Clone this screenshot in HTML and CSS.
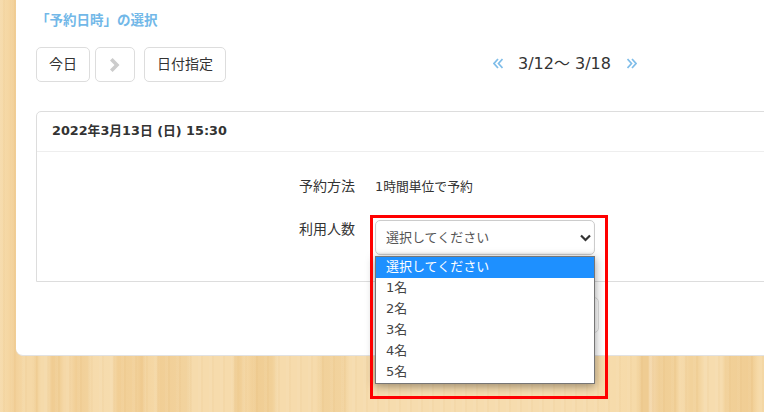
FILE: index.html
```html
<!DOCTYPE html>
<html lang="ja">
<head>
<meta charset="utf-8">
<title>予約日時の選択</title>
<link rel="stylesheet" href="styles.css">
</head>
<body>
<main class="card">
  <h2 class="title">「予約日時」の選択</h2>
  <div class="toolbar">
    <div class="tools">
      <button class="btn" type="button">今日</button>
      <button class="btn btn-icon" type="button" aria-label="次へ">
        <svg width="12" height="16" viewBox="0 0 12 16"><path class="chev" d="M1 3.500 3.600 1 10.500 8 3.600 15 1 12.500 5.500 8z"/></svg>
      </button>
      <button class="btn btn-date" type="button">日付指定</button>
    </div>
    <div class="range">
      <svg class="arrow" width="10" height="11" viewBox="0 0 10 11"><path d="M5 1 1 5.500 5 10M9.500 1 5.500 5.500 9.500 10"/></svg>
      <span class="range-text">3/12～ 3/18</span>
      <svg class="arrow" width="10" height="11" viewBox="0 0 10 11"><path d="M.5 1 4.500 5.500 .5 10M5 1 9 5.500 5 10"/></svg>
    </div>
  </div>
  <section class="panel">
    <h3 class="panel-head">2022年3月13日 (日) 15:30</h3>
    <div class="panel-body">
      <div class="row row-method">
        <span class="label">予約方法</span>
        <span class="value">1時間単位で予約</span>
      </div>
      <div class="row row-people">
        <span class="label">利用人数</span>
        <div class="select-wrap">
          <select class="select"><option>選択してください</option></select>
          <svg class="select-chev" width="11" height="8" viewBox="0 0 11 8"><path d="M1 1.500 5.500 6 10 1.500"/></svg>
        </div>
      </div>
    </div>
  </section>
  <button class="btn btn-hidden" type="button" aria-label="次へ進む"></button>
</main>
<ul class="menu">
  <li class="menu-item selected">選択してください</li>
  <li class="menu-item">1名</li>
  <li class="menu-item">2名</li>
  <li class="menu-item">3名</li>
  <li class="menu-item">4名</li>
  <li class="menu-item">5名</li>
</ul>
<div class="highlight"></div>
</body>
</html>
```
FILE: styles.css
```css
* { box-sizing: border-box; }
html, body { height: 100%; }
body {
  margin: 0;
  overflow: hidden;
  position: relative;
  padding-left: 16px;
  color: #333;
  font-family: "DejaVu Sans", "Noto Sans CJK JP", sans-serif;
  font-size: 14px;
  background-color: #f5d8a6;
  background-image:
    repeating-linear-gradient(90deg, rgba(255,255,255,.04) 0 3px, rgba(190,130,50,.04) 3px 5px, rgba(255,255,255,0) 5px 11px),
    linear-gradient(90deg,
    #f6dbab 0, #f5d7a3 8px, #f2cf97 14px, #f5d8a6 24px,
    #f5d8a6 32px, #f1cf96 36px, #f5daaa 41px, #f5daaa 48px,
    #f0cc92 52px, #f1d098 60px, #f5d8a7 64px, #f5d8a7 70px,
    #f1ce95 76px, #f2d29c 88px, #f6dbac 92px, #f6dcae 112px,
    #f1ce95 118px, #f2d19a 136px, #efca8f 142px, #f4d5a0 146px,
    #f5d8a6 156px, #f1ce95 160px, #f2d39e 188px, #f6dbac 192px,
    #f6dbac 232px, #efcc92 238px, #f5d7a4 246px, #f0cd93 256px,
    #f1d098 272px, #f6dbac 278px, #f6dbac 316px, #f1d19a 322px,
    #f2d39e 344px, #f6dcae 350px, #f6dcae 590px, #f6daa8 636px,
    #efcc92 641px, #efcc92 648px, #f5d9ae 650px, #f0ce95 660px,
    #f1d098 676px, #f6dbac 680px, #f2d29b 690px, #f2d29b 698px,
    #f6dcae 704px, #f6dcae 722px, #f1d098 726px, #f0cd93 752px,
    #f6daa8 758px);
}
.card {
  position: relative;
  width: 748px;
  height: 356px;
  padding: 11px 0 0 20px;
  overflow: hidden;
  background: #fff;
  border-bottom: 1px solid #e2e2e2;
  border-bottom-left-radius: 7px;
}
.title {
  margin: 0;
  height: 18px;
  color: #72b8e8;
  font-size: 13.500px;
  font-weight: 700;
  line-height: 18px;
}
.toolbar {
  display: flex;
  align-items: center;
  margin-top: 18px;
  height: 35px;
}
.tools { display: flex; width: 457px; }
.btn {
  height: 35px;
  padding: 0 0 1px;
  border: 1px solid #ddd;
  border-radius: 5px;
  background: #fff;
  color: #333;
  font: inherit;
  font-size: 14px;
  line-height: 1;
}
.tools .btn:first-child { width: 54px; }
.btn-icon {
  width: 40px;
  margin-left: 5px;
  padding: 0;
  display: flex;
  align-items: center;
  justify-content: center;
}
.chev { fill: #ccc; }
.btn-date { width: 82px; margin-left: 9px; }
.range {
  display: flex;
  align-items: center;
  font-size: 16px;
  line-height: 1;
}
.range-text { margin: 0 15px; width: 94px; white-space: nowrap; padding-bottom: 2px; }
.arrow { margin-bottom: 2px; }
.arrow path { fill: none; stroke: #7fbde9; stroke-width: 1.700; }
.panel {
  width: 800px;
  height: 171px;
  margin-top: 29px;
  border: 1px solid #ddd;
  border-top-left-radius: 5px;
  border-top-right-radius: 5px;
}
.panel-head {
  margin: 0;
  height: 40px;
  padding-left: 15px;
  border-bottom: 1px solid #eee;
  font-size: 12.800px;
  font-weight: 700;
  line-height: 38px;
}
.panel-body { padding-top: 24px; }
.row {
  display: grid;
  grid-template-columns: 318px 1fr;
  column-gap: 20px;
}
.label { text-align: right; line-height: 21px; }
.value { font-size: 12.800px; line-height: 21px; }
.row-people { margin-top: 22px; }
.select-wrap {
  position: relative;
  width: 220px;
  height: 35px;
  margin-top: 1px;
}
.select {
  display: block;
  width: 100%;
  height: 100%;
  padding: 0 30px 0 10px;
  appearance: none;
  -webkit-appearance: none;
  border: 1px solid #ccc;
  border-radius: 5px;
  background: #fff;
  box-shadow: inset 0 -1px 2px rgba(0,0,0,.06);
  color: #555;
  font: inherit;
  font-size: 13px;
}
.select-chev {
  position: absolute;
  right: 4px;
  top: 14px;
}
.select-chev path { fill: none; stroke: #333; stroke-width: 2.200; }
.btn-hidden {
  position: absolute;
  left: 461px;
  top: 297px;
  width: 122px;
  height: 36px;
}
.menu {
  position: absolute;
  left: 375px;
  top: 256px;
  width: 220px;
  height: 128px;
  margin: 0;
  padding: 0;
  list-style: none;
  border: 1px solid #767676;
  background: #fff;
  box-shadow: 0 2px 9px rgba(0,0,0,.4);
  color: #444;
  font-size: 13px;
}
.menu-item {
  height: 21px;
  padding-left: 10px;
  line-height: 19px;
}
.menu-item.selected { background: #1e90ff; color: #fff; }
.highlight {
  position: absolute;
  left: 370px;
  top: 215px;
  width: 238px;
  height: 184px;
  border: 3px solid #f00;
  pointer-events: none;
}
```
